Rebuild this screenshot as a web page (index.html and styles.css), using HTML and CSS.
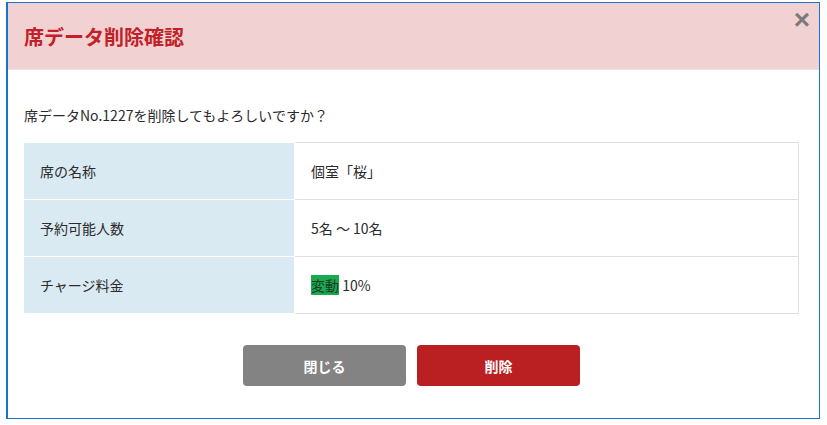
FILE: index.html
```html
<!DOCTYPE html>
<html lang="ja">

<head>
    <meta charset="UTF-8">
    <title>席データ削除確認</title>
    <link rel="stylesheet" href="styles.css">
</head>

<body>
    <div class="modal">
        <div class="modal-header">
            <h2 class="modal-title">席データ削除確認</h2>
            <button class="modal-close" type="button">&times;</button>
        </div>
        <div class="modal-body">
            <p class="confirm-text">席データNo.1227を削除してもよろしいですか？</p>
            <table class="detail-table">
                <tr>
                    <th>席の名称</th>
                    <td>個室「桜」</td>
                </tr>
                <tr>
                    <th>予約可能人数</th>
                    <td>5名 ～ 10名</td>
                </tr>
                <tr>
                    <th>チャージ料金</th>
                    <td><span class="tag">変動</span> 10%</td>
                </tr>
            </table>
            <div class="modal-actions">
                <button class="btn btn-close" type="button">閉じる</button>
                <button class="btn btn-delete" type="button">削除</button>
            </div>
        </div>
    </div>
</body>

</html>
```

FILE: styles.css
```css
body {
    margin: 0;
    padding: 2px 7px 7px 6px;
    background: #fff;
    color: #2b2b2b;
    font-family: "Noto Sans CJK JP", "Noto Sans", sans-serif;
    font-size: 14px;
}

.modal {
    border: 1px solid #1474d0;
    border-left-width: 2px;
    background: #fff;
}

.modal-header {
    position: relative;
    height: 66px;
    background: #f2d1d3;
    border-bottom: 1px solid #e4e4e4;
    padding-left: 16px;
    display: flex;
    align-items: center;
}

.modal-title {
    margin: 0;
    font-size: 20px;
    font-weight: bold;
    color: #c1222a;
}

.modal-close {
    position: absolute;
    top: 3px;
    right: 9px;
    border: none;
    background: none;
    padding: 0;
    font-family: Arial, sans-serif;
    font-size: 28px;
    font-weight: bold;
    line-height: 28px;
    color: #7a7a7a;
}

.modal-body {
    padding: 0 20px 32px 16px;
}

.confirm-text {
    margin: 0;
    padding: 34px 0 16px;
    line-height: 22px;
}

.detail-table {
    width: 100%;
    border-collapse: collapse;
}

.detail-table th,
.detail-table td {
    height: 56px;
    padding: 0 16px;
    border: 1px solid #e0e0e0;
    text-align: left;
    font-weight: normal;
}

.detail-table th {
    width: 238px;
    background: #daeaf3;
    border-color: #fff;
    border-left: none;
}

.tag {
    background: #19aa50;
    color: #1c3a26;
}

.modal-actions {
    display: flex;
    justify-content: center;
    gap: 11px;
    padding-top: 31px;
}

.btn {
    width: 163px;
    height: 41px;
    border: none;
    border-radius: 4px;
    color: #fff;
    font-family: inherit;
    font-size: 14px;
    font-weight: bold;
}

.btn-close {
    background: #838383;
}

.btn-delete {
    background: #ba1f22;
}
```
